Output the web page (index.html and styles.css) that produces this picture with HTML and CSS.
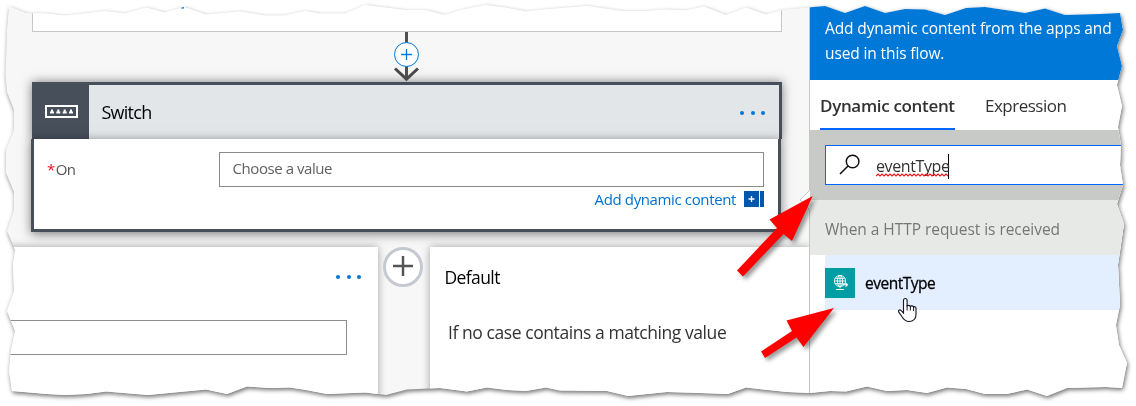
FILE: index.html
```html
<!DOCTYPE html>
<html lang="en">
<head>
<meta charset="utf-8">
<title>Switch - Dynamic content</title>
<link rel="stylesheet" href="styles.css">
</head>
<body>
<div class="sheet-shadow">
  <div class="sheet">
    <main class="canvas">
      <section class="previous-step">
        <svg class="step-mark" width="12" height="9" viewBox="0 0 12 9"><path d="M1 7.5h3M6 6.5l3 .5" stroke="#0078d7" stroke-width="2" fill="none"/></svg>
      </section>
      <div class="connector">
        <svg width="26" height="50" viewBox="0 0 26 50">
          <path d="M13.500 0v47" stroke="#4f4f4f" stroke-width="3"/>
          <path d="M2 36.500 13.500 47.200 25 36.500" stroke="#4a4a4a" stroke-width="3" fill="none"/>
          <circle cx="13.500" cy="22.500" r="12" fill="#fff" stroke="#0078d7"/>
          <path d="M8 22.500h11M13.500 17v11" stroke="#0078d7" stroke-width="1.300"/>
        </svg>
      </div>
      <section class="switch-card">
        <header class="switch-header">
          <div class="switch-icon">
            <svg width="33" height="13" viewBox="0 0 33 13">
              <rect x="1" y="1" width="31" height="11" fill="none" stroke="#fff" stroke-width="2"/>
              <path d="M5 8.500v-2h1v-2h2v2h1v2zM11.300 8.500v-2h1v-2h2v2h1v2zM17.700 8.500v-2h1v-2h2v2h1v2zM24 8.500v-2h1v-2h2v2h1v2z" fill="#fff"/>
            </svg>
          </div>
          <h1 class="switch-title">Switch</h1>
          <div class="dots"><i></i><i></i><i></i></div>
        </header>
        <div class="switch-body">
          <div class="field-row">
            <label class="field-label"><span class="required">*</span>On</label>
            <div class="value-field">Choose a value</div>
          </div>
          <div class="add-row">
            <span class="add-link">Add dynamic content</span>
            <svg width="20" height="16" viewBox="0 0 20 16"><path d="M0 0h15v16H0zM16 0h4v16h-4z" fill="#0057ad"/><path d="M4.500 8h6M7.500 5v6" stroke="#fff" stroke-width="1.300"/></svg>
          </div>
        </div>
      </section>
      <div class="cases">
        <section class="case-card">
          <div class="dots case-dots"><i></i><i></i><i></i></div>
          <div class="case-field"></div>
        </section>
        <div class="case-gap">
          <svg width="40" height="40" viewBox="0 0 40 40"><circle cx="20" cy="20" r="18.500" fill="#fff" stroke="#c5cad1" stroke-width="3"/><path d="M10 19h20M20 9v20" stroke="#555" stroke-width="2.500"/></svg>
        </div>
        <section class="default-card">
          <h2 class="default-title">Default</h2>
          <p class="default-text">If no case contains a matching value</p>
        </section>
      </div>
    </main>
    <aside class="panel">
      <div class="banner"><span class="banner-first">Add dynamic content from the apps and</span><br><span class="banner-second">used in this flow.</span></div>
      <nav class="tabs">
        <span class="tab tab-active">Dynamic content</span>
        <span class="tab tab-plain">Expression</span>
      </nav>
      <div class="search-area">
        <div class="search-box">
          <svg width="22" height="22" viewBox="0 0 22 22"><circle cx="13.600" cy="7.500" r="6.300" fill="none" stroke="#111" stroke-width="1.500"/><path d="M9 12 1 20" stroke="#111" stroke-width="1.600"/></svg>
          <span class="search-value">eventType<svg class="squiggle" width="73" height="4" viewBox="0 0 73 4"><path d="M0 3l2-2 2 2 2-2 2 2 2-2 2 2 2-2 2 2 2-2 2 2 2-2 2 2 2-2 2 2 2-2 2 2 2-2 2 2 2-2 2 2 2-2 2 2 2-2 2 2 2-2 2 2 2-2 2 2 2-2 2 2 2-2 2 2 2-2 2 2 2-2 2 2" fill="none" stroke="#f01818" stroke-width="1.200"/></svg></span>
        </div>
      </div>
      <h3 class="group-title">When a HTTP request is received</h3>
      <div class="result">
        <svg width="30" height="30" viewBox="0 0 30 30"><path d="M0 0h30v30H0z" fill="#009da5"/><g fill="none" stroke="#fff" stroke-width=".9"><circle cx="15" cy="13" r="5.600"/><ellipse cx="15" cy="13" rx="2.600" ry="5.600"/><path d="M9.400 13h11.200M10.300 10.300h9.400M10.300 15.700h9.400M15 7.400v13M11 21.500h8"/><path d="M17.500 16.800h4.500M20.500 15l2 1.800-2 1.800" stroke-width="1.100"/></g></svg>
        <span class="result-name">eventType</span>
      </div>
    </aside>
    <svg class="beak" width="11" height="22" viewBox="0 0 11 22"><path d="M11 1 1 11l10 10" fill="#fff" stroke="#c8c8c8"/></svg>
  </div>
</div>
<svg class="marks" width="1136" height="406" viewBox="0 0 1136 406">
  <g class="arrows" fill="#f00">
    <path d="M812.700 196 769.500 219.500 777 228 737 270.500 743 276.500 783.500 234 792 241z"/>
    <path d="M834 308 786.500 320.500 792 331 761 351.500 765 358 796.500 337.500 803.500 347z"/>
  </g>
  <path d="M903.500 313v-12.500c0-2.700 3.600-2.700 3.600 0v6c0-1.500 3-1.500 3.300.3.400-1.400 2.900-1.200 3.200.6.500-1.200 2.400-.8 2.400 1v6c0 4-2.500 7.100-6.800 7.100-4.300 0-6-2.500-7.700-5.500l-2.700-3.800c-1.200-1.800.8-2.900 2.100-1.800z" fill="#fff" stroke="#171729" stroke-width="1.150"/><path d="M907.100 305v5.500M910.400 306v4.500M913.600 307v4" stroke="#171729" fill="none"/>
</svg>
</body>
</html>
```
FILE: styles.css
```css
* { box-sizing: border-box; }
body { margin: 0; width: 1136px; height: 406px; overflow: hidden; background: #fff; font-family: "Open Sans", "Noto Sans", sans-serif; position: relative; }
h1, h2, h3, p { margin: 0; font-weight: 400; }
svg { display: block; flex: none; }

/* Torn page outline */
.sheet-shadow { filter: drop-shadow(1.5px 2px 2px rgba(0, 0, 0, .55)); }
.sheet {
  position: relative; display: flex; width: 1136px; height: 406px; background: #f7f7f7; overflow: hidden;
  clip-path: polygon(9px 6px, 26px 13px, 46px 13.5px, 63px 15.5px, 80px 14px, 105px 11px, 125px 13.5px, 146px 7.5px, 165px 12.5px, 184px 7px, 206px 14.5px, 240px 11.5px, 265px 15.5px, 285px 15.5px, 305px 11px, 320px 13.5px, 345px 13.5px, 365px 5px, 405px 10px, 425px 10px, 445px 15px, 463px 9.5px, 485px 5px, 505px 7.5px, 526px 11.5px, 550px 9px, 587px 6px, 622px 11px, 647px 11px, 665px 9.5px, 685px 10.5px, 704px 6.5px, 726px 15px, 746px 7.5px, 766px 14.5px, 785px 9.5px, 808px 7.5px, 825px 6px, 845px 13px, 865px 6px, 885px 13px, 905px 9px, 925px 9.5px, 945px 15px, 966px 8px, 985px 7px, 1005px 10px, 1025px 13px, 1045px 8.5px, 1065px 15px, 1100px 14px, 1120px 13px, 1123px 30px, 1117px 46px, 1122px 66px, 1117px 85px, 1122px 106px, 1118px 127px, 1121px 145px, 1120px 165px, 1123px 185px, 1117px 204px, 1124px 224px, 1118px 265px, 1120px 305px, 1116px 325px, 1119px 345px, 1127px 363px, 1122px 388px, 1106px 387px, 1067px 388px, 1047px 396px, 1027px 389.5px, 1007px 394px, 985px 394px, 966px 389px, 947px 387.5px, 927px 393px, 907px 390px, 887px 391px, 867px 386.5px, 846px 391.5px, 830px 391px, 810px 393px, 787px 392px, 746px 387.5px, 728px 394px, 700px 393px, 667px 392px, 628px 396px, 607px 391px, 560px 390.5px, 546px 387.5px, 526px 391px, 507px 390px, 487px 387.5px, 467px 391.5px, 440px 388px, 407px 389.5px, 386px 395px, 365px 392.5px, 327px 394px, 306px 390px, 290px 387.5px, 270px 388px, 247px 386.5px, 227px 394px, 206px 389.5px, 148px 395px, 106px 391.5px, 87px 394px, 65px 395px, 47px 394px, 12px 391px, 9px 372px, 11px 350px, 15px 331px, 7px 311px, 14px 291px, 13px 265px, 15px 250px, 7px 231px, 14px 210px, 14px 192px, 6px 173px, 6px 150px, 14px 130px, 14px 110px, 7px 92px, 5.5px 75px, 6px 60px, 7px 30px);
}

/* Flow canvas */
.canvas { width: 809px; flex: none; display: flex; flex-direction: column; overflow: hidden; }
.previous-step { height: 32px; width: 750px; margin-left: 32px; background: #fff; border: 1px solid #c6c6c6; border-top: 0; padding-left: 147px; }
.connector { height: 50px; padding-left: 393px; position: relative; z-index: 1; }
.switch-card { width: 751px; margin-left: 31px; height: 150px; }
.switch-header { height: 57px; width: 750px; margin-left: 1px; display: flex; background: #e2e6e9; border-top: 3px solid #474f5b; border-right: 3px solid #474f5b; box-shadow: 0 0 10px rgba(0, 0, 0, .5); }
.switch-icon { width: 57px; background: #474f5b; padding: 20px 0 0 13px; }
.switch-title { margin-left: 12.500px; flex: 1; font-size: 18px; line-height: 54px; letter-spacing: -.75px; color: #000; }
.dots { display: flex; gap: 6.500px; }
.dots i { width: 4px; height: 4px; border-radius: 50%; background: #0078d7; }
.switch-header .dots { margin: 26px 14px 0 0; }
.switch-body { position: relative; width: 750px; height: 93px; background: #fff; border: 3px solid #474f5b; border-top: 0; padding: 13px 14px 0 13px; box-shadow: 0 2px 10px rgba(0, 0, 0, .5); }
.field-row { display: flex; justify-content: space-between; }
.field-label { font-size: 15px; line-height: 35px; letter-spacing: -.6px; color: #555; }
.required { color: #e81123; margin-right: 1px; }
.value-field { width: 545px; height: 35px; border: 1px solid #8a8a8a; padding-left: 12.500px; line-height: 31px; font-size: 15px; letter-spacing: -.43px; color: #606060; }
.add-row { display: flex; justify-content: flex-end; gap: 8px; padding-top: 4px; }
.add-link { font-size: 15px; line-height: 17px; letter-spacing: -.37px; color: #0071d0; white-space: nowrap; }
.cases { display: flex; flex: 1; margin-top: 15px; }
.case-card { width: 378px; background: #fff; box-shadow: 0 0 8px rgba(0, 0, 0, .35); }
.case-dots { margin: 28px 0 0 336px; }
.case-field { width: 349px; height: 35px; margin: 41px 0 0 -2px; border: 1px solid #8c8c8c; }
.case-gap { width: 52px; padding-left: 5px; position: relative; z-index: 1; }
.default-card { flex: 1; background: #fff; box-shadow: 0 0 8px rgba(0, 0, 0, .35); padding: 17px 0 0 14.500px; white-space: nowrap; }
.default-title { font-size: 17.500px; line-height: 27px; letter-spacing: -.6px; color: #000; }
.default-text { margin: 28px 0 0 3.500px; font-size: 17.500px; line-height: 26px; letter-spacing: -.43px; color: #333; }

/* Dynamic content panel */
.panel { width: 327px; flex: none; border-left: 1px solid #c6c6c6; background: #fff; white-space: nowrap; overflow: hidden; position: relative; }
.banner { height: 80px; background: #0078d7; color: #fff; padding: 16px 0 0 15px; font-size: 15.500px; line-height: 25px; }
.banner-first, .banner-second { letter-spacing: -.12px; }
.tabs { display: flex; height: 50px; padding-left: 10px; gap: 30px; color: #323232; }
.tab { font-size: 17px; line-height: 51px; height: 50px; }
.tab-active { width: 135px; font-weight: 600; letter-spacing: -.33px; border-bottom: 2px solid #06f; }
.tab-plain { letter-spacing: -.5px; }
.search-area { height: 70px; background: #c8cac7; padding: 15px 0 0 15px; }
.search-box { height: 40px; background: #fff; border: 1px solid #06f; display: flex; padding: 8px 0 0 13px; }
.search-value { position: relative; margin-left: 15px; width: 73px; height: 25px; line-height: 24px; font-size: 16px; letter-spacing: -.4px; color: #323232; border-right: 1px solid #000; }
.squiggle { position: absolute; left: 0; top: 19px; }
.group-title { height: 55px; background: #e7e9e6; padding-left: 15px; font-size: 15.500px; line-height: 58px; letter-spacing: -.05px; color: #767676; }
.result { height: 55px; margin-left: 15px; background: #e3efff; display: flex; align-items: center; gap: 10px; }
.result-name { font-size: 15.500px; letter-spacing: -.5px; color: #000; -webkit-text-stroke: .3px #000; }

/* Pointing marks over the page */
.beak { position: absolute; left: 799px; top: 189px; }
.marks { position: absolute; left: 0; top: 0; }
.arrows { filter: drop-shadow(3px 3px 2px rgba(0, 0, 0, .4)); }
```
